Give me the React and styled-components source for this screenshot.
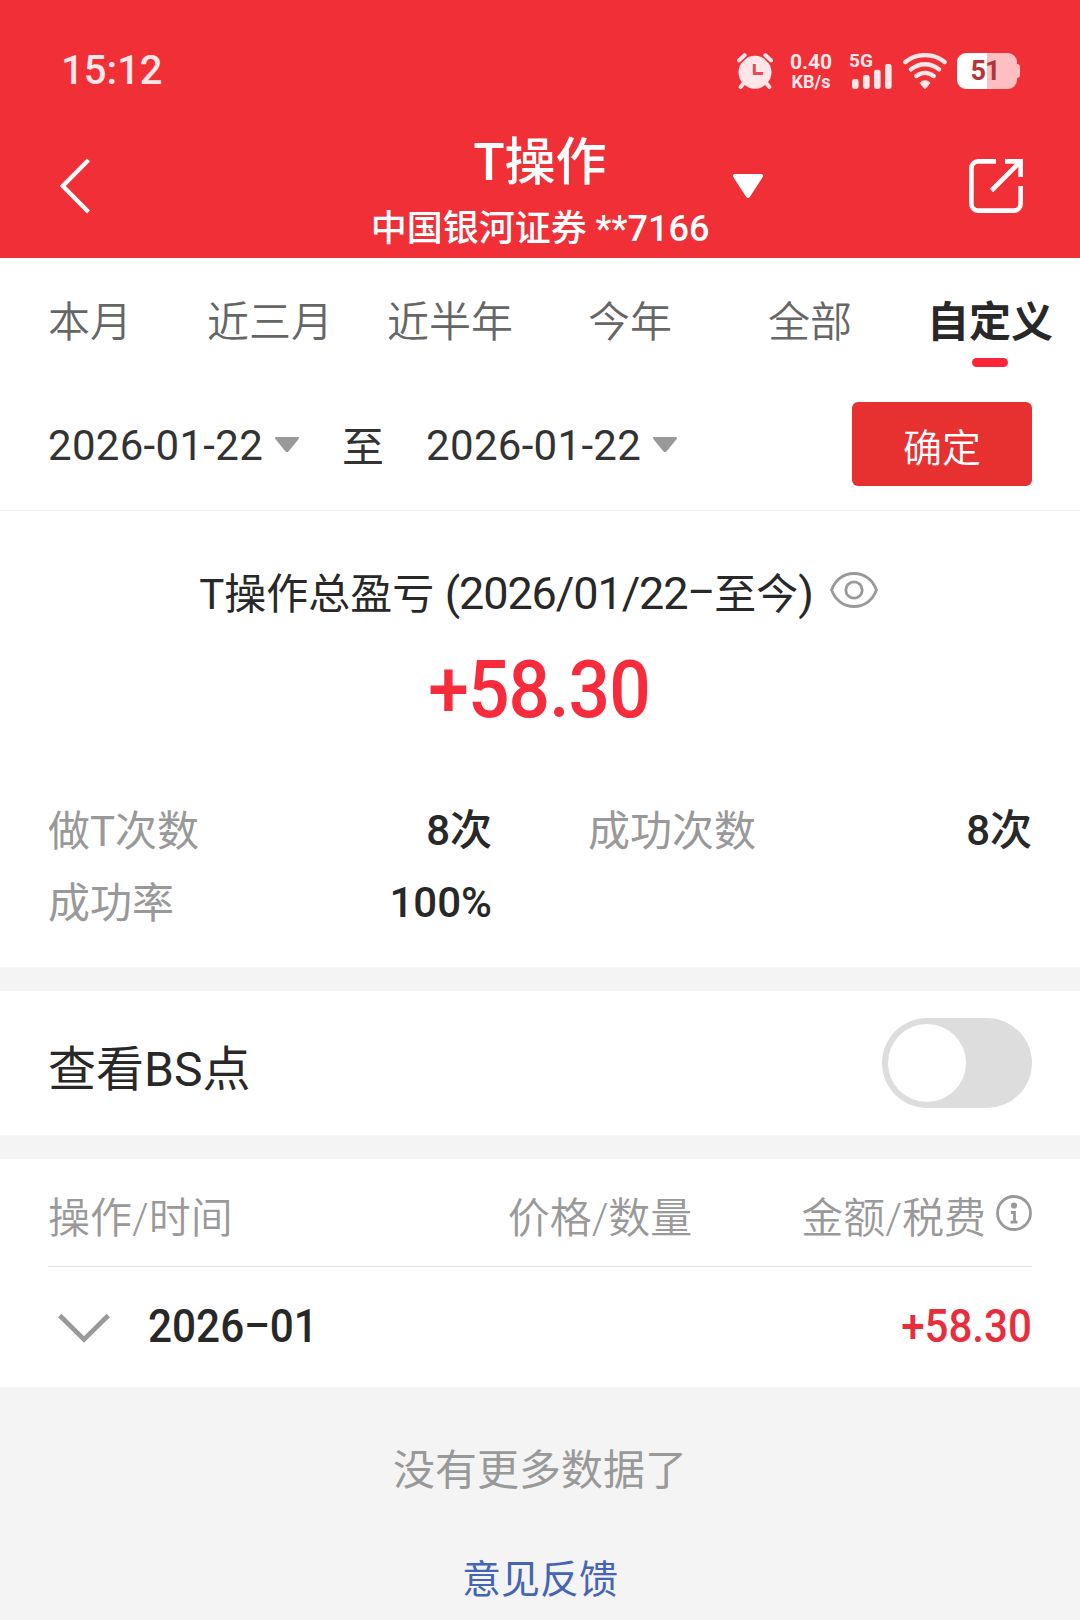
import React, { useState } from "react";
import styled, { createGlobalStyle } from "styled-components";

const GlobalStyle = createGlobalStyle`
  * {
    box-sizing: border-box;
  }

  body {
    margin: 0;
    background: #f4f4f4;
    font-family: Roboto, "Noto Sans CJK SC", sans-serif;
    color: #282828;
  }

  button {
    margin: 0;
    padding: 0;
    border: none;
    background: none;
    font: inherit;
    color: inherit;
    cursor: pointer;
  }

  svg {
    display: block;
    flex: none;
  }
`;

const Page = styled.div`
  width: 1080px;
  height: 1620px;
  overflow: hidden;
  background: #f4f4f4;
`;

const Header = styled.header`
  height: 258px;
  background: #f12f37;
  color: #fff;
`;

// 状态栏
const StatusBar = styled.div`
  height: 112px;
  padding: 30px 60px 0 61px;
  display: flex;
  justify-content: space-between;
  align-items: center;
  color: #ffe7e9;
`;

const Clock = styled.div`
  font-size: 40px;
  font-weight: 500;
  line-height: 60px;
`;

const StatusIcons = styled.div`
  height: 36px;
  display: flex;
  align-items: flex-start;
`;

const NetSpeed = styled.div`
  width: 44px;
  margin: 0 17px 0 16px;
  display: flex;
  flex-direction: column;
  align-items: center;
  font-weight: 700;
`;

const SpeedValue = styled.span`
  font-size: 21px;
  line-height: 18px;
`;

const SpeedUnit = styled.span`
  font-size: 18px;
  line-height: 21px;
`;

const Signal = styled.div`
  position: relative;
  width: 42px;
  height: 36px;
  margin-right: 10px;
`;

const NetType = styled.span`
  position: absolute;
  left: -1px;
  top: 0;
  font-size: 19px;
  font-weight: 700;
  line-height: 16px;
`;

const Battery = styled.div`
  position: relative;
  width: 60px;
  height: 36px;
  margin: 0 3px 0 9px;
  border-radius: 9px;
  background: linear-gradient(90deg, #fff 50%, #fdbfc1 50%);
  color: #b5343a;
  font-size: 27px;
  font-weight: 700;
  line-height: 36px;
  letter-spacing: -1px;
  text-align: center;
  padding-right: 4px;

  &::after {
    content: "";
    position: absolute;
    left: 60px;
    top: 11px;
    width: 3px;
    height: 14px;
    border-radius: 0 3px 3px 0;
    background: #fdbfc1;
  }
`;

// 标题栏
const NavBar = styled.div`
  height: 146px;
  padding: 0 57px 0 60px;
  display: grid;
  grid-template-columns: 309px 1fr 312px;
`;

const NavSide = styled.div`
  height: 148px;
  display: flex;
  align-items: center;
  justify-content: space-between;
`;

const TitleBlock = styled.div`
  display: flex;
  flex-direction: column;
  align-items: center;
  font-weight: 500;
  white-space: nowrap;
  padding-top: 21px;
`;

const Title = styled.h1`
  margin: 0;
  font-size: 51px;
  font-weight: 500;
  line-height: 60px;
`;

const Account = styled.div`
  margin-top: 12px;
  font-size: 36px;
  line-height: 48px;
`;

// 时间范围
const Tabs = styled.nav`
  height: 126px;
  display: grid;
  grid-template-columns: repeat(6, 1fr);
  background: #fff;
`;

const Tab = styled.button`
  display: flex;
  flex-direction: column;
  align-items: center;
  padding-top: 35px;
  font-size: 42px;
  line-height: 60px;
  font-weight: ${({ $active }) => ($active ? 700 : 350)};
  color: ${({ $active }) => ($active ? "#282828" : "#666")};
  white-space: nowrap;

  &::after {
    content: "";
    width: 36px;
    height: 9px;
    margin-top: 5px;
    border-radius: 5px;
    background: ${({ $active }) => ($active ? "#fb2639" : "transparent")};
  }
`;

const DateBar = styled.div`
  height: 127px;
  padding: 18px 48px 24px;
  display: flex;
  align-items: center;
  background: #fff;
  border-bottom: 1px solid #f2f2f2;
  font-size: 42px;
  line-height: 60px;
  color: #333;
`;

const DateField = styled.button`
  display: flex;
  align-items: center;
  gap: 12px;
`;

const DateText = styled.span`
  padding-top: 4px;
  letter-spacing: 0.3px;
`;

const DateJoin = styled.span`
  margin: 8px 42px 0 43px;
`;

const ConfirmButton = styled.button`
  width: 180px;
  height: 84px;
  margin-left: auto;
  padding-top: 10px;
  border-radius: 6px;
  background: #e73030;
  color: #fff;
  font-size: 39px;
  font-weight: 350;
`;

// 汇总
const Summary = styled.section`
  height: 456px;
  padding: 53px 48px 0;
  background: #fff;
`;

const SummaryTitle = styled.div`
  display: flex;
  align-items: center;
  justify-content: center;
  gap: 17px;
  padding-right: 3px;
  font-size: 42px;
  line-height: 60px;
  white-space: nowrap;
`;

const Figures = styled.span`
  font-size: 45px;
  letter-spacing: -1.1px;
`;

const Dash = styled.span`
  font-size: 0.94em;
  vertical-align: 0.05em;
  line-height: 1;
`;

const Total = styled.div`
  margin-top: 20px;
  padding-right: 2px;
  text-align: center;
  font-size: 79px;
  font-weight: 500;
  line-height: 90px;
  letter-spacing: -1px;
  color: #f72b3b;
  transform: scaleX(0.925);
`;

const Stats = styled.div`
  margin-top: 61px;
  display: grid;
  grid-template-columns: 1fr 1fr;
  column-gap: 96px;
`;

const Stat = styled.div`
  height: 72px;
  display: flex;
  align-items: center;
  justify-content: space-between;
  font-size: 42px;
  line-height: 60px;
`;

const StatLabel = styled.span`
  color: #999;
`;

const StatValue = styled.span`
  margin-top: -2px;
  font-weight: 500;
`;

const SwitchRow = styled.section`
  height: 144px;
  margin: 24px 0;
  padding: 0 48px;
  display: flex;
  align-items: center;
  justify-content: space-between;
  background: #fff;
  font-size: 48px;
`;

const SwitchLabel = styled.span`
  padding-top: 3px;
`;

const Switch = styled.button`
  width: 150px;
  height: 90px;
  padding: 6px;
  border-radius: 45px;
  display: flex;
  justify-content: ${({ $on }) => ($on ? "flex-end" : "flex-start")};
  background: ${({ $on }) => ($on ? "#e73030" : "#ddd")};
`;

const Knob = styled.span`
  width: 78px;
  height: 78px;
  border-radius: 50%;
  background: #fff;
`;

// 明细
const Records = styled.section`
  height: 228px;
  padding: 0 48px;
  background: #fff;
`;

const RecordHead = styled.div`
  height: 108px;
  padding-top: 4px;
  display: grid;
  grid-template-columns: 1fr 1fr 1fr;
  align-items: center;
  border-bottom: 1px solid #e6e6e6;
  font-size: 42px;
  font-weight: 350;
  color: #999;
  white-space: nowrap;
`;

const HeadCell = styled.div`
  display: flex;
  align-items: center;
  justify-content: ${({ $align }) => $align};
  gap: 10px;
  ${({ $shift }) => $shift && `padding-left: ${$shift}px;`}
`;

const MonthRow = styled.div`
  height: 120px;
  padding-bottom: 2px;
  display: flex;
  align-items: center;
  font-size: 46px;
  font-weight: 500;
`;

const Month = styled.span`
  margin-left: 38px;
  transform: scaleX(0.92);
  transform-origin: left;
`;

const Profit = styled.span`
  margin-left: auto;
  color: #e82d3c;
  transform: scaleX(0.915);
  transform-origin: right;
`;

const Footer = styled.footer`
  padding-top: 54px;
  display: flex;
  flex-direction: column;
  align-items: center;
  color: #999;
`;

const NoMore = styled.div`
  font-size: 42px;
  line-height: 60px;
`;

const Feedback = styled.a`
  margin-top: 49px;
  font-size: 39px;
  line-height: 60px;
  color: #4465b5;
`;

const AlarmIcon = () => (
  <svg width="36" height="36" viewBox="0 0 36 36" fill="none" stroke="currentColor">
    <circle cx="18" cy="19.2" r="16.5" fill="currentColor" stroke="none" />
    <path d="M-.2 9.6 9.4 0M36.2 9.6 26.6 0" stroke="#f12f37" strokeWidth="7.5" />
    <path d="M2 7.4 7.6 2.2M34 7.4l-5.6-5.2" strokeWidth="4" strokeLinecap="round" />
    <path d="m6 31-2.4 3M30 31l2.4 3" strokeWidth="4" strokeLinecap="round" />
    <path d="M17.3 11v9.5h8.8" stroke="#e54b52" strokeWidth="3" />
  </svg>
);

const SignalBars = () => (
  <svg width="42" height="36" viewBox="0 0 42 36" fill="currentColor">
    <rect x="2" y="26" width="6.6" height="10" rx="2.4" />
    <rect x="13" y="22" width="6.6" height="14" rx="2.4" />
    <rect x="24" y="16.7" width="6.6" height="19.3" rx="2.4" />
    <rect x="35" y="11" width="6.6" height="25" rx="2.4" />
  </svg>
);

const WifiIcon = () => (
  <svg width="46" height="36" viewBox="0 0 46 36" fill="none" stroke="currentColor">
    <path
      d="M3.4 9C14.6-.2 31.4-.2 42.6 9M9 16.4c8.4-6.8 19.6-6.8 28 0M14.4 23c5.2-4.2 12-4.2 17.2 0"
      strokeWidth="4.4"
      strokeLinecap="round"
    />
    <path d="M18.4 30c2.6-2.6 6.6-2.6 9.2 0L23 35.2z" fill="currentColor" strokeWidth="1.4" strokeLinejoin="round" />
  </svg>
);

const BackIcon = () => (
  <svg width="32" height="56" viewBox="0 0 32 56" fill="none" stroke="#fff" strokeWidth="4.2">
    <path d="M28.5 2 2.8 28l25.7 26" />
  </svg>
);

const ShareIcon = () => (
  <svg width="54" height="54" viewBox="0 0 54 54" fill="none" stroke="#fff" strokeWidth="4.6">
    <path d="M27 2.4H9A6.6 6.6 0 0 0 2.4 9v36A6.6 6.6 0 0 0 9 51.6h36a6.6 6.6 0 0 0 6.6-6.6V27" />
    <path d="M36 2.4h15.6V18M51.6 2.4 22.5 31.5" />
  </svg>
);

const Caret = ({ width, height, color }) => (
  <svg width={width} height={height} viewBox="0 0 30 24" preserveAspectRatio="none">
    <path
      d="M2 0h26c1.8 0 2.6 1.8 1.6 3.2L16.8 23c-.9 1.3-2.7 1.3-3.6 0L.4 3.2C-.6 1.8.2 0 2 0z"
      fill={color}
    />
  </svg>
);

const EyeIcon = () => (
  <svg width="48" height="36" viewBox="0 0 48 36" fill="none" stroke="#999" strokeWidth="2.8">
    <path d="M1.6 18C5 8.5 13 1.5 24 1.5S43 8.5 46.4 18C43 27.5 35 34.500 24 34.5S5 27.5 1.6 18z" />
    <circle cx="24" cy="18" r="8.2" />
  </svg>
);

const InfoIcon = () => (
  <svg width="36" height="36" viewBox="0 0 36 36" fill="none" stroke="#999">
    <circle cx="18" cy="18" r="16.5" strokeWidth="2.8" />
    <circle cx="18" cy="10.5" r="3.1" fill="#999" stroke="none" />
    <path d="M15 17.5h3.5V27M14.5 27.2h7" strokeWidth="2.8" />
  </svg>
);

const ExpandIcon = () => (
  <svg width="52" height="30" viewBox="0 0 52 30" fill="none" stroke="#999" strokeWidth="4.6">
    <path d="M1.8 2.5 26 26.5l24.200-24" />
  </svg>
);

const ChevronSlot = styled.div`
  margin: 3px 0 0 10px;
`;

const CaretSlot = styled.div`
  margin-left: 22px;
`;

const InfoSlot = styled.div`
  margin-top: -4px;
`;

const EyeSlot = styled.div`
  margin-top: -10px;
`;

const tabs = ["本月", "近三月", "近半年", "今年", "全部", "自定义"];

const stats = [
  { label: "做T次数", value: "8次" },
  { label: "成功次数", value: "8次" },
  { label: "成功率", value: "100%" },
];

const App = () => {
  const [activeTab, setActiveTab] = useState("自定义");
  const [showPoints, setShowPoints] = useState(false);

  return (
    <Page>
      <GlobalStyle />
      <Header>
        <StatusBar>
          <Clock>15:12</Clock>
          <StatusIcons>
            <AlarmIcon />
            <NetSpeed>
              <SpeedValue>0.40</SpeedValue>
              <SpeedUnit>KB/s</SpeedUnit>
            </NetSpeed>
            <Signal>
              <SignalBars />
              <NetType>5G</NetType>
            </Signal>
            <WifiIcon />
            <Battery>51</Battery>
          </StatusIcons>
        </StatusBar>
        <NavBar>
          <NavSide>
            <BackIcon />
          </NavSide>
          <TitleBlock>
            <Title>T操作</Title>
            <Account>中国银河证券 **7166</Account>
          </TitleBlock>
          <NavSide>
            <CaretSlot>
              <Caret width={30} height={24} color="#fff" />
            </CaretSlot>
            <ShareIcon />
          </NavSide>
        </NavBar>
      </Header>

      <Tabs>
        {tabs.map((tab) => (
          <Tab key={tab} $active={tab === activeTab} onClick={() => setActiveTab(tab)}>
            {tab}
          </Tab>
        ))}
      </Tabs>

      <DateBar>
        <DateField>
          <DateText>2026-01-22</DateText>
          <Caret width={24} height={15} color="#999" />
        </DateField>
        <DateJoin>至</DateJoin>
        <DateField>
          <DateText>2026-01-22</DateText>
          <Caret width={24} height={15} color="#999" />
        </DateField>
        <ConfirmButton>确定</ConfirmButton>
      </DateBar>

      <Summary>
        <SummaryTitle>
          <span>
            T操作总盈亏 <Figures>(2026/01/22<Dash>–</Dash></Figures>至今<Figures>)</Figures>
          </span>
          <EyeSlot>
            <EyeIcon />
          </EyeSlot>
        </SummaryTitle>
        <Total>+58.30</Total>
        <Stats>
          {stats.map((item) => (
            <Stat key={item.label}>
              <StatLabel>{item.label}</StatLabel>
              <StatValue>{item.value}</StatValue>
            </Stat>
          ))}
        </Stats>
      </Summary>

      <SwitchRow>
        <SwitchLabel>查看BS点</SwitchLabel>
        <Switch $on={showPoints} onClick={() => setShowPoints(!showPoints)}>
          <Knob />
        </Switch>
      </SwitchRow>

      <Records>
        <RecordHead>
          <HeadCell $align="flex-start">操作/时间</HeadCell>
          <HeadCell $align="center" $shift={120}>价格/数量</HeadCell>
          <HeadCell $align="flex-end">
            金额/税费
            <InfoSlot>
              <InfoIcon />
            </InfoSlot>
          </HeadCell>
        </RecordHead>
        <MonthRow>
          <ChevronSlot>
            <ExpandIcon />
          </ChevronSlot>
          <Month>2026<Dash>–</Dash>01</Month>
          <Profit>+58.30</Profit>
        </MonthRow>
      </Records>

      <Footer>
        <NoMore>没有更多数据了</NoMore>
        <Feedback>意见反馈</Feedback>
      </Footer>
    </Page>
  );
};

export default App;
